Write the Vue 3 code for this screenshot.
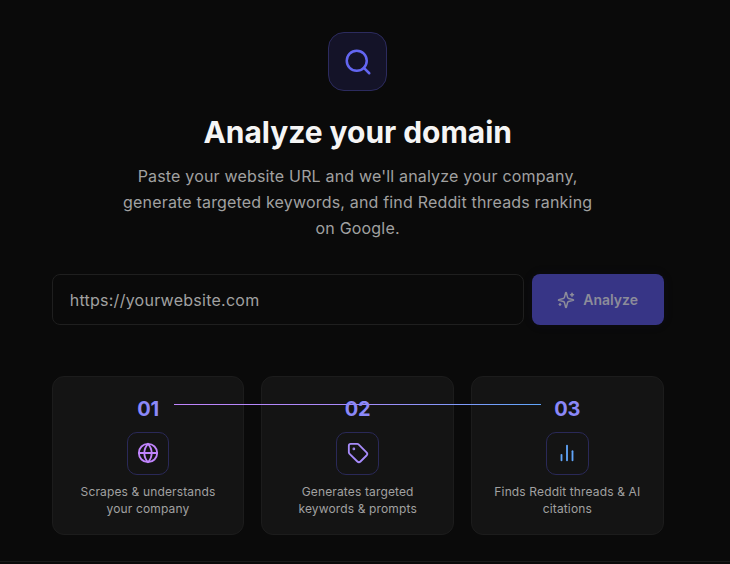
<template>
  <div class="page">
    <div class="hero-icon">
      <svg width="30" height="30" viewBox="0 0 24 24" fill="none" stroke="#6366f1" stroke-width="2" stroke-linecap="round" stroke-linejoin="round">
        <circle cx="11" cy="11" r="8" />
        <path d="m21 21-4.3-4.3" />
      </svg>
    </div>
    <h1>Analyze your domain</h1>
    <p class="lead">Paste your website URL and we'll analyze your company, generate targeted keywords, and find Reddit threads ranking on Google.</p>

    <div class="search-row">
      <div class="url-input">https://yourwebsite.com</div>
      <button class="analyze-btn">
        <svg width="18" height="18" viewBox="0 0 24 24" fill="none" stroke="currentColor" stroke-width="2" stroke-linecap="round" stroke-linejoin="round">
          <path d="M9.94 15.5A2 2 0 0 0 8.5 14.06l-6.14-1.58a.5.5 0 0 1 0-.96L8.5 9.94A2 2 0 0 0 9.94 8.5l1.58-6.14a.5.5 0 0 1 .96 0l1.58 6.14a2 2 0 0 0 1.44 1.44l6.14 1.58a.5.5 0 0 1 0 .96l-6.14 1.58a2 2 0 0 0-1.44 1.44l-1.58 6.14a.5.5 0 0 1-.96 0z" />
          <path d="M20 3v4" />
          <path d="M22 5h-4" />
          <path d="M4 17v2" />
          <path d="M5 18H3" />
        </svg>
        Analyze
      </button>
    </div>

    <div class="steps">
      <div class="connector"></div>
      <div v-for="step in steps" :key="step.num" class="step">
        <span class="num">{{ step.num }}</span>
        <div class="step-icon" :class="step.key">
          <svg v-if="step.key === 'globe'" width="22" height="22" viewBox="0 0 24 24" fill="none" stroke="currentColor" stroke-width="2" stroke-linecap="round" stroke-linejoin="round">
            <circle cx="12" cy="12" r="10" />
            <path d="M12 2a14.5 14.5 0 0 0 0 20 14.5 14.5 0 0 0 0-20" />
            <path d="M2 12h20" />
          </svg>
          <svg v-else-if="step.key === 'tag'" width="22" height="22" viewBox="0 0 24 24" fill="none" stroke="currentColor" stroke-width="2" stroke-linecap="round" stroke-linejoin="round">
            <path d="M12.586 2.586A2 2 0 0 0 11.172 2H4a2 2 0 0 0-2 2v7.172a2 2 0 0 0 .586 1.414l8.704 8.704a2.426 2.426 0 0 0 3.42 0l6.58-6.58a2.426 2.426 0 0 0 0-3.42z" />
            <circle cx="7.5" cy="7.5" r=".5" fill="currentColor" />
          </svg>
          <svg v-else width="22" height="22" viewBox="0 0 24 24" fill="none" stroke="currentColor" stroke-width="2" stroke-linecap="round" stroke-linejoin="round">
            <path d="M18 20V10" />
            <path d="M12 20V4" />
            <path d="M6 20v-6" />
          </svg>
        </div>
        <p class="desc">{{ step.text }}</p>
      </div>
    </div>
    <div class="bottom-rule"></div>
  </div>
</template>

<script setup>
const steps = [
  { num: '01', key: 'globe', text: 'Scrapes & understands your company' },
  { num: '02', key: 'tag', text: 'Generates targeted keywords & prompts' },
  { num: '03', key: 'bars', text: 'Finds Reddit threads & AI citations' }
]
</script>

<style>
html, body {
  margin: 0;
  background: #0a0a0a;
  overflow: hidden;
}
</style>

<style scoped>
.page {
  box-sizing: border-box;
  position: relative;
  width: 730px;
  height: 564px;
  padding: 32px 66.33px 0 51.67px;
  background: #0a0a0a;
  font-family: Inter, "Liberation Sans", sans-serif;
  display: flex;
  flex-direction: column;
  align-items: center;
}

.hero-icon {
  box-sizing: border-box;
  width: 59px;
  height: 59px;
  border-radius: 16px;
  border: 1px solid #2c2b5e;
  background: #141328;
  display: flex;
  align-items: center;
  justify-content: center;
}

h1 {
  margin: 22px 0 0;
  font-size: 30px;
  line-height: 38px;
  font-weight: 700;
  letter-spacing: -0.05px;
  color: #f5f5f5;
}

.lead {
  margin: 12px 0 0;
  width: 480px;
  font-size: 16px;
  line-height: 26px;
  letter-spacing: 0.18px;
  text-align: center;
  color: #a1a1a1;
}

.search-row {
  margin-top: 33px;
  width: 100%;
  display: flex;
  gap: 8px;
}

.url-input {
  box-sizing: border-box;
  flex: 1;
  height: 51px;
  padding: 0 17px;
  display: flex;
  align-items: center;
  background: #0a0a0a;
  border: 1px solid #1f1f1f;
  border-radius: 8px;
  font-size: 16px;
  letter-spacing: 0.26px;
  color: #a1a1a1;
}

.analyze-btn {
  box-sizing: border-box;
  width: 132px;
  height: 51px;
  border: none;
  border-radius: 8px;
  background: #373586;
  box-shadow: 0 0 12px rgba(55, 53, 134, 0.08);
  color: #8c8c9a;
  font-family: inherit;
  font-size: 14px;
  font-weight: 600;
  display: flex;
  align-items: center;
  justify-content: center;
  gap: 8px;
}

.steps {
  position: relative;
  margin-top: 51px;
  width: 100%;
  display: grid;
  grid-template-columns: repeat(3, 1fr);
  gap: 17px;
}

.connector {
  position: absolute;
  left: 122.33px;
  right: 122.67px;
  top: 28px;
  height: 1px;
  background: linear-gradient(90deg, #c084fc, #a78bfa 50%, #60a5fa);
}

.step {
  box-sizing: border-box;
  height: 159px;
  padding: 22px 16px 0;
  background: #141414;
  border: 1px solid #1c1c1c;
  border-radius: 12px;
  display: flex;
  flex-direction: column;
  align-items: center;
}

.num {
  position: relative;
  z-index: 2;
  font-size: 20px;
  line-height: 20px;
  font-weight: 700;
  letter-spacing: -0.2px;
  color: #8b88f8;
}

.step-icon {
  box-sizing: border-box;
  margin-top: 13px;
  width: 42.4px;
  height: 42.6px;
  border: 1px solid #2a2958;
  border-radius: 10px;
  display: flex;
  align-items: center;
  justify-content: center;
}

.step-icon.globe { color: #c084fc; }
.step-icon.tag { color: #a78bfa; }
.step-icon.bars { color: #60a5fa; }

.desc {
  margin: 8.4px 0 0;
  font-size: 12px;
  line-height: 17px;
  letter-spacing: 0.14px;
  text-align: center;
  color: #a1a1a1;
}

.bottom-rule {
  position: absolute;
  left: 0;
  right: 0;
  top: 561px;
  height: 1px;
  background: #1a1a1a;
}
</style>
